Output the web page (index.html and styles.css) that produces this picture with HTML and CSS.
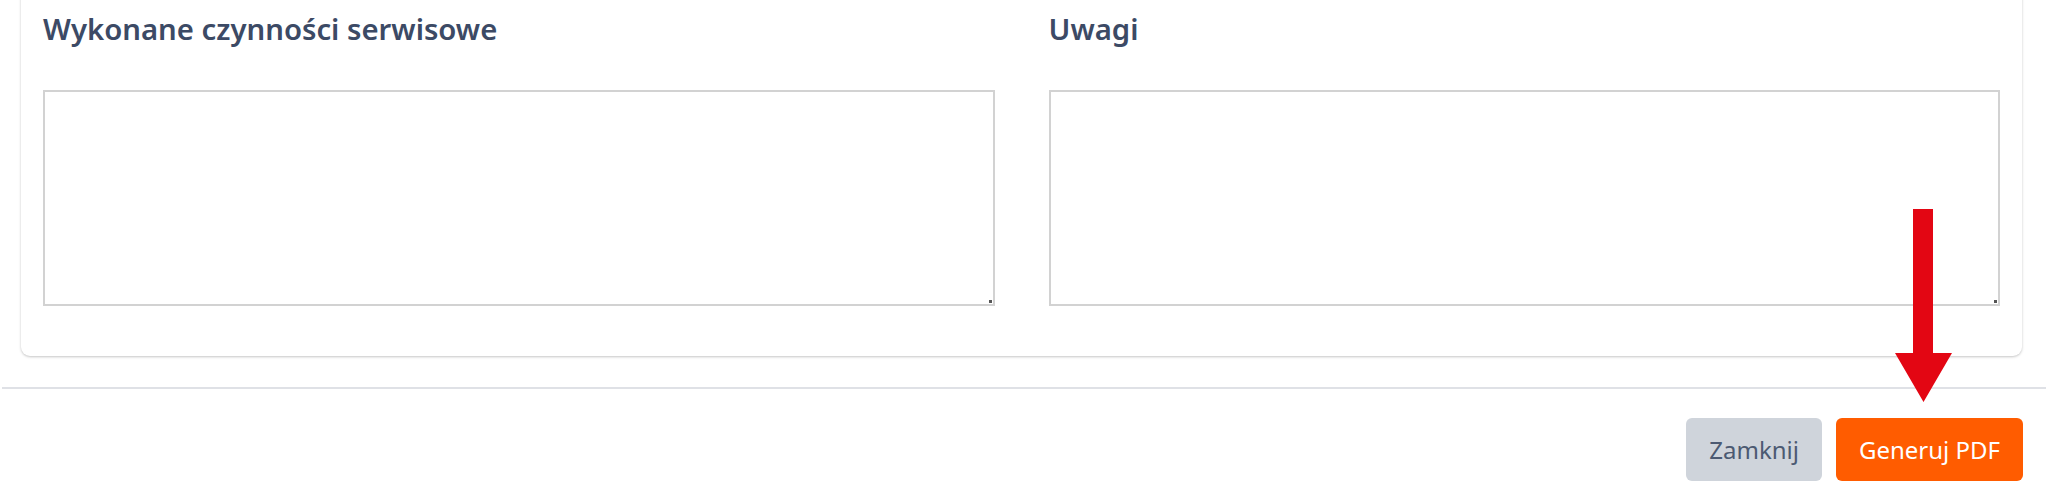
FILE: index.html
```html
<!DOCTYPE html>
<html lang="pl">
<head>
<meta charset="utf-8">
<title>Protokół serwisowy</title>
<link rel="stylesheet" href="styles.css">
</head>
<body>
<div class="modal-body">
  <section class="card">
    <div class="grid">
      <div class="field">
        <h3 class="field-title">Wykonane czynności serwisowe</h3>
        <div class="input-wrap"><textarea class="field-input"></textarea></div>
      </div>
      <div class="field">
        <h3 class="field-title">Uwagi</h3>
        <div class="input-wrap"><textarea class="field-input"></textarea></div>
      </div>
    </div>
  </section>
</div>
<footer class="modal-footer">
  <button class="btn btn-secondary">Zamknij</button>
  <button class="btn btn-primary">Generuj PDF</button>
</footer>
<svg class="pointer-arrow" width="57" height="193" viewBox="0 0 57 193" aria-hidden="true">
  <polygon points="18,0 38,0 38,144 57,144 28.5,193 0,144 18,144" fill="#e30613"/>
</svg>
</body>
</html>
```
FILE: styles.css
```css
* { box-sizing: border-box; }
html, body { margin: 0; padding: 0; background: #ffffff; }
body {
  font-family: "Noto Sans", "Liberation Sans", sans-serif;
  position: relative;
  width: 2048px;
  height: 501px;
  overflow: hidden;
}
.modal-body {
  padding: 0 26px 0 21px;
}
.card {
  margin-top: -30px;
  background: #fff;
  border-radius: 9px;
  box-shadow: 0 1px 3px rgba(0,0,0,0.16), 0 1px 2px rgba(0,0,0,0.08);
  padding: 39px 22px 50px 22px;
}
.grid {
  display: grid;
  grid-template-columns: 1fr 1fr;
  column-gap: 54px;
}
.field { display: flex; flex-direction: column; }
.field-title {
  margin: 0 0 40px 0;
  font-size: 29.3px;
  font-weight: 600;
  line-height: 41px;
  color: #3c4a65;
}
.input-wrap {
  position: relative;
}
.input-wrap::after {
  content: "";
  position: absolute;
  right: 3px;
  bottom: 3px;
  width: 3px;
  height: 3px;
  background: #555;
}
.field-input {
  display: block;
  width: 100%;
  height: 216px;
  border: 2px solid #d2d2d2;
  border-radius: 0;
  background: #fff;
  font-family: inherit;
  font-size: 16px;
  resize: none;
  outline: none;
  padding: 6px;
}
.modal-footer {
  margin: 31px 2px 0 2px;
  border-top: 2px solid #dfe1e6;
  padding: 29px 23px 0 0;
  display: flex;
  justify-content: flex-end;
  gap: 14px;
}
.btn {
  height: 63px;
  border: none;
  border-radius: 6px;
  font-family: "Noto Sans", "Liberation Sans", sans-serif;
  font-size: 24px;
  padding: 0 23px;
  cursor: pointer;
}
.btn-secondary {
  background: #cfd4db;
  color: #4c5a72;
}
.btn-primary {
  background: #ff5c00;
  color: #ffffff;
}
.pointer-arrow {
  position: absolute;
  left: 1895px;
  top: 209px;
}
```
